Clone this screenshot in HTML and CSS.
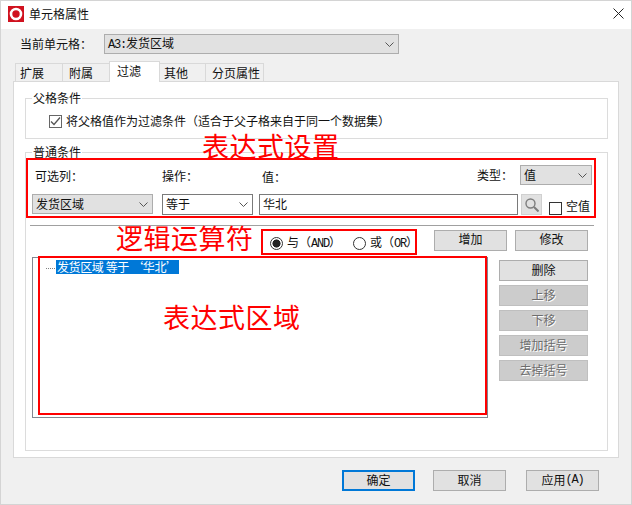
FILE: index.html
```html
<!DOCTYPE html>
<html lang="zh-CN">
<head>
<meta charset="utf-8">
<title>单元格属性</title>
<link rel="stylesheet" href="styles.css">
</head>
<body>
<div class="window">
  <div class="titlebar">
    <svg class="logo" width="16" height="16" viewBox="0 0 16 16"><rect width="16" height="16" fill="#d0121f"/><circle cx="8" cy="8" r="5" fill="none" stroke="#fff" stroke-width="2.6"/></svg>
    <span class="title">单元格属性</span>
    <svg class="close" width="11" height="11" viewBox="0 0 11 11"><path d="M.5.5l10 10M10.5.5l-10 10" stroke="#222" stroke-width="1" fill="none"/></svg>
  </div>
  <div class="current">
    <span class="current-label">当前单元格：</span>
    <div class="combo combo-current"><span><span class="latin">A3:</span>发货区域</span><svg class="chev" width="9" height="5" viewBox="0 0 9 5"><path d="M.5.5l4 4 4-4" stroke="#555" fill="none"/></svg></div>
  </div>
  <div class="tabs">
    <div class="tab tab-1">扩展</div>
    <div class="tab tab-2">附属</div>
    <div class="tab tab-active">过滤</div>
    <div class="tab tab-4">其他</div>
    <div class="tab tab-5">分页属性</div>
  </div>
  <div class="panel">
    <div class="group group-parent">
      <span class="legend">父格条件</span>
      <div class="parent-row">
        <span class="check"><svg width="11" height="11" viewBox="0 0 11 11"><path d="M1 5.5l3 3 6-7" stroke="#555" stroke-width="1.3" fill="none"/></svg></span>
        <span class="parent-text">将父格值作为过滤条件（适合于父子格来自于同一个数据集）</span>
      </div>
    </div>
    <div class="group group-normal">
      <span class="legend">普通条件</span>
      <div class="row-labels">
        <span class="lab lab-col">可选列：</span>
        <span class="lab lab-op">操作：</span>
        <span class="lab lab-val">值：</span>
        <span class="lab lab-type">类型：</span>
        <div class="combo combo-type"><span>值</span><svg class="chev" width="9" height="5" viewBox="0 0 9 5"><path d="M.5.5l4 4 4-4" stroke="#555" fill="none"/></svg></div>
      </div>
      <div class="row-controls">
        <div class="combo combo-col"><span>发货区域</span><svg class="chev" width="9" height="5" viewBox="0 0 9 5"><path d="M.5.5l4 4 4-4" stroke="#555" fill="none"/></svg></div>
        <div class="combo combo-op"><span>等于</span><svg class="chev" width="9" height="5" viewBox="0 0 9 5"><path d="M.5.5l4 4 4-4" stroke="#555" fill="none"/></svg></div>
        <div class="field">华北</div>
        <div class="search"><svg width="14" height="14" viewBox="0 0 14 14"><circle cx="5.5" cy="5.5" r="4.5" fill="none" stroke="#7d7d7d" stroke-width="1.4"/><path d="M9 9l4.5 4.5" stroke="#7d7d7d" stroke-width="2"/></svg></div>
        <span class="check check-empty"></span>
        <span class="empty-label">空值</span>
      </div>
      <div class="separator"></div>
      <div class="row-logic">
        <div class="radios">
          <span class="radio radio-on"></span><span class="radio-text">与（<span class="latin">AND</span>）</span>
          <span class="radio radio-second"></span><span class="radio-text">或（<span class="latin">OR</span>）</span>
        </div>
        <div class="btn btn-add">增加</div>
        <div class="btn btn-edit">修改</div>
      </div>
      <div class="row-tree">
        <div class="tree">
          <div class="node"><span class="dots"></span><span class="node-text">发货区域 等于 ‘华北’</span></div>
        </div>
        <div class="side">
          <div class="btn btn-side">删除</div>
          <div class="btn btn-side btn-off">上移</div>
          <div class="btn btn-side btn-off">下移</div>
          <div class="btn btn-side btn-off">增加括号</div>
          <div class="btn btn-side btn-off">去掉括号</div>
        </div>
      </div>
    </div>
  </div>
  <div class="footer">
    <div class="btn btn-foot btn-default">确定</div>
    <div class="btn btn-foot">取消</div>
    <div class="btn btn-foot btn-apply">应用<span class="latin">(A)</span></div>
  </div>
  <div class="mark mark-settings"></div>
  <div class="mark mark-logic"></div>
  <div class="mark mark-tree"></div>
  <div class="note note-settings">表达式设置</div>
  <div class="note note-logic">逻辑运算符</div>
  <div class="note note-tree">表达式区域</div>
</div>
</body>
</html>
```
FILE: styles.css
```css
* { box-sizing: border-box; }
html, body { margin: 0; padding: 0; }
body { width: 632px; height: 505px; overflow: hidden; font: 12px/14px "Noto Sans CJK SC", "Liberation Sans", sans-serif; color: #111; }
.latin { font-family: "Liberation Mono", monospace; font-size: 12px; letter-spacing: -1.2px; }
.window { position: relative; width: 632px; height: 505px; background: #f0f0f0; border: 1px solid #d4d4d4; }
.titlebar { display: flex; align-items: center; height: 28px; background: #fff; padding: 0 0 3px 7px; }
.title { margin-left: 5px; }
.close { margin-left: auto; margin-right: 7px; }
.current { display: flex; align-items: center; height: 20px; margin-top: 5px; padding-left: 19px; }
.current-label { width: 84px; }
.combo { display: flex; align-items: center; justify-content: space-between; height: 20px; background: #e1e1e1; border: 1px solid #adadad; padding: 0 4px 0 3px; }
.combo-current { width: 295px; }
.tabs { display: flex; align-items: flex-end; height: 20px; margin-top: 7px; margin-left: 14px; position: relative; z-index: 1; }
.tab { display: flex; align-items: center; height: 18px; background: #f0f0f0; border: 1px solid #d9d9d9; border-bottom: 0; border-right: 0; padding-top: 1px; }
.tab-1 { width: 47px; padding-left: 4px; }
.tab-2 { width: 47px; padding-left: 6px; }
.tab-active { width: 51px; height: 21px; margin-bottom: -1px; background: #fff; border-right: 1px solid #d9d9d9; padding: 0 0 2px 7px; }
.tab-4 { width: 45px; padding-left: 4px; border-left: 0; }
.tab-5 { width: 59px; padding-left: 6px; border-right: 1px solid #d9d9d9; }
.panel { width: 606px; height: 377px; margin-left: 12px; background: #fff; border: 1px solid #d9d9d9; padding: 16px 0 0 11px; }
.group { position: relative; width: 583px; border: 1px solid #dcdcdc; }
.legend { position: absolute; top: -8px; left: 6px; padding: 0 1px; background: #fff; }
.group-parent { height: 41px; padding: 15px 0 0 23px; }
.parent-row { display: flex; align-items: center; height: 14px; }
.check { display: flex; align-items: center; justify-content: center; flex: none; width: 13px; height: 13px; background: #fff; border: 1px solid #333; }
.group-parent .check { border-color: #666; }
.parent-text { margin-left: 4px; }
.group-normal { height: 299px; margin-top: 13px; }
.row-labels { display: flex; align-items: center; height: 20px; margin-top: 12px; padding-left: 9px; }
.lab-col { width: 127px; padding-top: 2px; }
.lab-op { width: 100px; padding-top: 2px; }
.lab-val { width: 215px; padding-top: 4px; }
.lab-type { width: 43px; }
.combo-type { width: 72px; }
.row-controls { display: flex; height: 21px; margin-top: 9px; padding-left: 6px; }
.combo-col { width: 121px; height: 20px; }
.combo-op { width: 91px; height: 21px; margin-left: 9px; background: #fff; border-color: #7a7a7a; }
.combo-op span { padding-bottom: 2px; }
.field { width: 259px; height: 21px; margin-left: 6px; background: #fff; border: 1px solid #7a7a7a; padding: 2px 3px; }
.search { display: flex; align-items: center; justify-content: center; width: 21px; height: 21px; margin-left: 3px; background: #e1e1e1; border: 1px solid #d0d0d0; }
.check-empty { align-self: flex-end; margin-left: 7px; }
.empty-label { align-self: flex-end; margin: 0 0 2px 4px; }
.separator { width: 564px; height: 1px; margin: 10px 0 0 4px; background: #a0a0a0; }
.row-logic { display: flex; height: 21px; margin-top: 4px; padding-left: 244px; }
.radios { display: flex; align-items: center; width: 164px; height: 14px; margin-top: 6px; }
.radio { flex: none; width: 13px; height: 13px; border: 1px solid #333; border-radius: 50%; background: #fff; }
.radio-on { background: radial-gradient(circle, #222 0 3.8px, #fff 4.3px); }
.radio-second { margin-left: 12px; }
.radio-text { margin-left: 4px; white-space: nowrap; }
.btn { display: flex; align-items: center; justify-content: center; height: 21px; background: #e1e1e1; border: 1px solid #adadad; padding-bottom: 2px; }
.btn-add, .btn-edit { width: 73px; padding-bottom: 3px; }
.btn-edit { margin-left: 8px; }
.row-tree { display: flex; margin-top: 6px; padding-left: 6px; }
.tree { width: 456px; height: 161px; background: #fff; border: 1px solid #828790; padding: 2px 0 0 13px; }
.node { display: flex; align-items: center; height: 14px; }
.dots { width: 9px; height: 1px; margin: 2px 1px 0 0; border-top: 1px dotted #808080; }
.node-text { background: #0078d7; color: #fff; padding: 0 1px; white-space: pre; letter-spacing: -0.4px; }
.side { display: flex; flex-direction: column; gap: 4px; width: 89px; margin: 3px 0 0 11px; }
.btn-off { background: #ccc; border-color: #bfbfbf; color: #6d6d6d; text-shadow: 1px 1px 0 #fff; }
.footer { display: flex; gap: 18px; margin-top: 12px; padding-left: 341px; }
.btn-foot { width: 73px; }
.btn-default { border: 2px solid #0078d7; }
.btn-apply { margin-left: 2px; }
.mark { position: absolute; border: 2px solid #f00; pointer-events: none; }
.mark-settings { left: 25px; top: 157px; width: 570px; height: 60px; }
.mark-logic { left: 260px; top: 228px; width: 156px; height: 26px; }
.mark-tree { left: 37px; top: 255px; width: 449px; height: 159px; }
.note { position: absolute; color: #f00; font-size: 27px; line-height: 30px; letter-spacing: 0.5px; white-space: nowrap; }
.note-settings { left: 201px; top: 130px; }
.note-logic { left: 115px; top: 222px; }
.note-tree { left: 162px; top: 301px; }
```
